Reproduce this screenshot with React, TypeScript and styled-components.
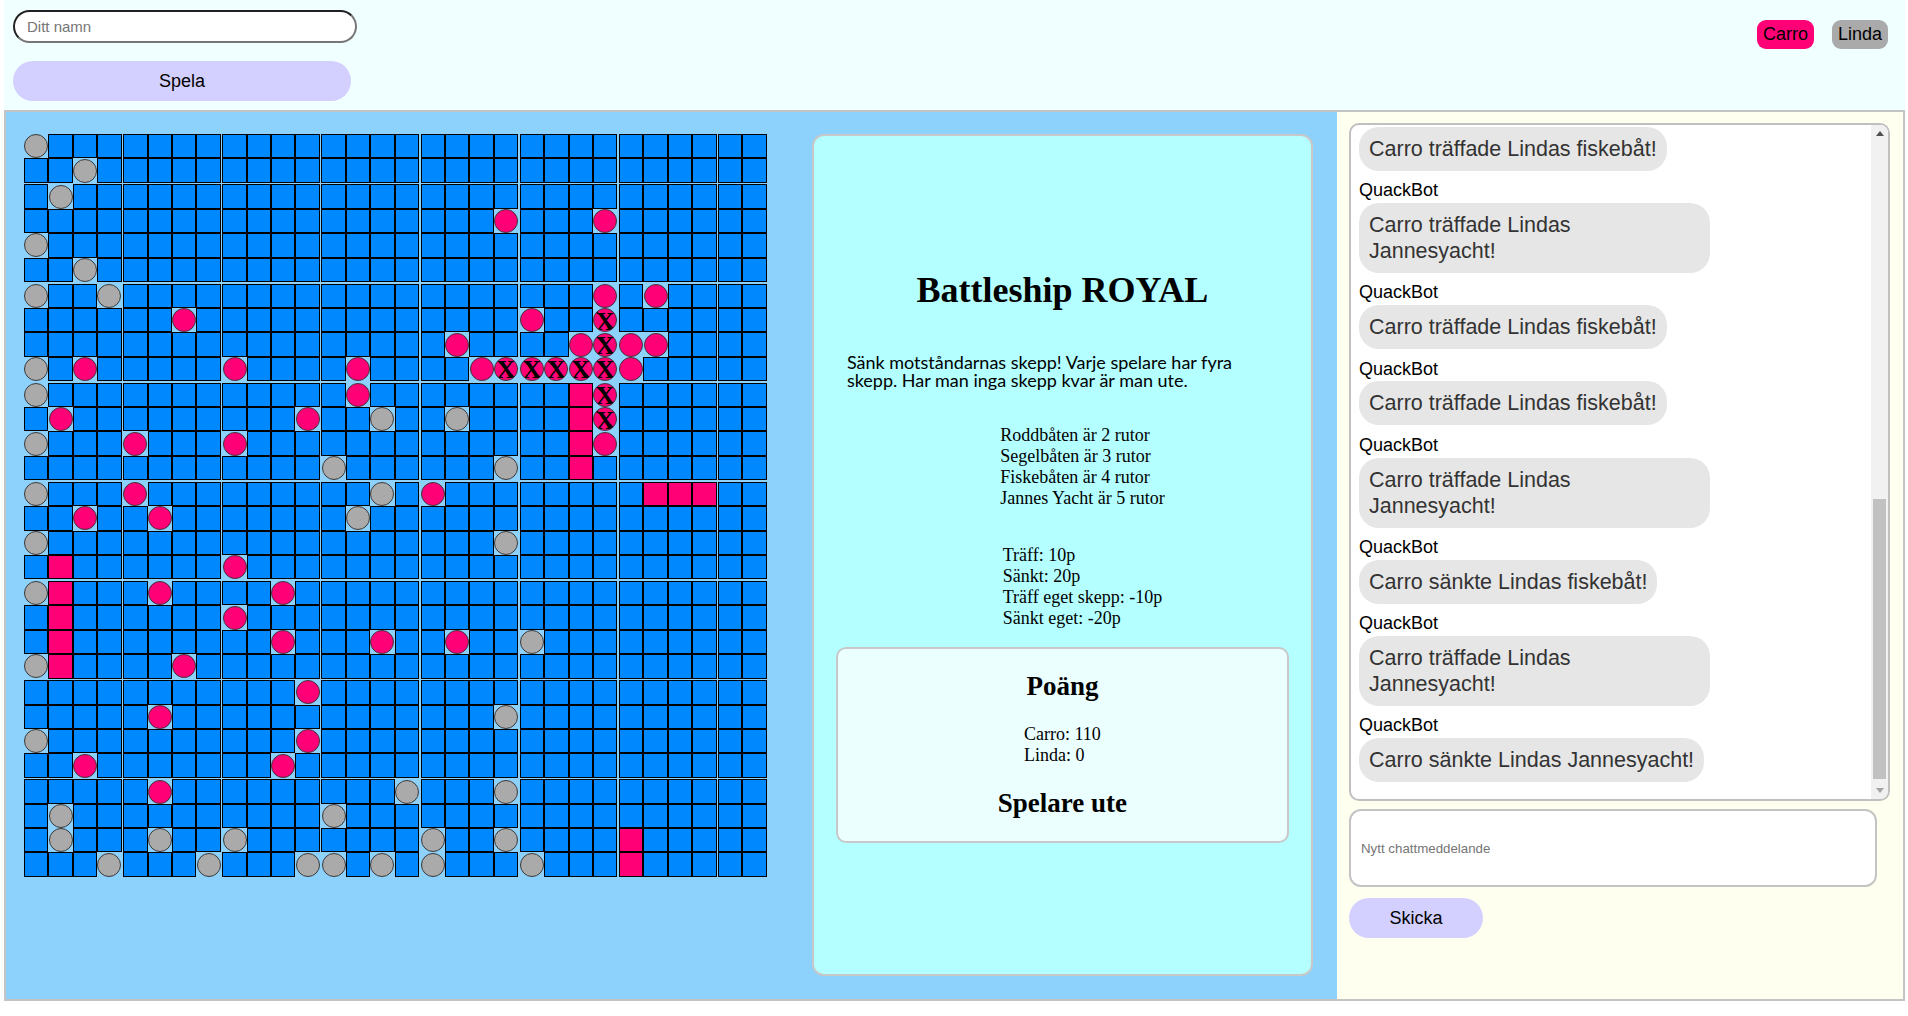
import React, { useLayoutEffect, useRef } from "react";
import styled, { createGlobalStyle } from "styled-components";

const GlobalStyle = createGlobalStyle`
  html, body { margin: 0; padding: 0; background: #ffffff; }
  body { font-family: "Liberation Sans", Arial, sans-serif; color: #000; }
  *, *::before, *::after { box-sizing: border-box; }
`;

type Kind = "water" | "miss" | "hit" | "sunk" | "ship";

const SIZE = 30;

const marks: Record<number, Record<number, Kind>> = {
  0: { 0: "miss" },
  1: { 2: "miss" },
  2: { 1: "miss" },
  3: { 19: "hit", 23: "hit" },
  4: { 0: "miss" },
  5: { 2: "miss" },
  6: { 0: "miss", 3: "miss", 23: "hit", 25: "hit" },
  7: { 6: "hit", 20: "hit", 23: "sunk" },
  8: { 17: "hit", 22: "hit", 23: "sunk", 24: "hit", 25: "hit" },
  9: { 0: "miss", 2: "hit", 8: "hit", 13: "hit", 18: "hit", 19: "sunk", 20: "sunk", 21: "sunk", 22: "sunk", 23: "sunk", 24: "hit" },
  10: { 0: "miss", 13: "hit", 22: "ship", 23: "sunk" },
  11: { 1: "hit", 11: "hit", 14: "miss", 17: "miss", 22: "ship", 23: "sunk" },
  12: { 0: "miss", 4: "hit", 8: "hit", 22: "ship", 23: "hit" },
  13: { 12: "miss", 19: "miss", 22: "ship" },
  14: { 0: "miss", 4: "hit", 14: "miss", 16: "hit", 25: "ship", 26: "ship", 27: "ship" },
  15: { 2: "hit", 5: "hit", 13: "miss" },
  16: { 0: "miss", 19: "miss" },
  17: { 1: "ship", 8: "hit" },
  18: { 0: "miss", 1: "ship", 5: "hit", 10: "hit" },
  19: { 1: "ship", 8: "hit" },
  20: { 1: "ship", 10: "hit", 14: "hit", 17: "hit", 20: "miss" },
  21: { 0: "miss", 1: "ship", 6: "hit" },
  22: { 11: "hit" },
  23: { 5: "hit", 19: "miss" },
  24: { 0: "miss", 11: "hit" },
  25: { 2: "hit", 10: "hit" },
  26: { 5: "hit", 15: "miss", 19: "miss" },
  27: { 1: "miss", 12: "miss" },
  28: { 1: "miss", 5: "miss", 8: "miss", 16: "miss", 19: "miss", 24: "ship" },
  29: { 3: "miss", 7: "miss", 11: "miss", 12: "miss", 14: "miss", 16: "miss", 20: "miss", 24: "ship" },
};

const kindAt = (r: number, c: number): Kind => (marks[r] && marks[r][c]) || "water";

const earlierMessages = [
  "Välkommen till Battleship ROYAL!",
  "Carro har gått med i spelet!",
  "Linda har gått med i spelet!",
  "Spelet har börjat!",
  "Carro träffade Lindas Jannesyacht!",
  "Carro träffade Lindas Jannesyacht!",
  "Carro träffade Lindas fiskebåt!",
  "Carro träffade Lindas Jannesyacht!",
  "Carro träffade Lindas fiskebåt!",
  "Linda är ute ur spelet!",
];

const visibleMessages = [
  "Carro träffade Lindas fiskebåt!",
  "Carro träffade Lindas Jannesyacht!",
  "Carro träffade Lindas fiskebåt!",
  "Carro träffade Lindas fiskebåt!",
  "Carro träffade Lindas Jannesyacht!",
  "Carro sänkte Lindas fiskebåt!",
  "Carro träffade Lindas Jannesyacht!",
  "Carro sänkte Lindas Jannesyacht!",
];

const messages = [...earlierMessages, ...visibleMessages];

/* ---------- layout ---------- */

const Page = styled.div`
  margin: 0 3px 0 4px;
`;

const Header = styled.header`
  height: 110px;
  background: #f0ffff;
  display: flex;
  justify-content: space-between;
  align-items: flex-start;
  padding: 10px 17px 0 9px;
`;

const JoinForm = styled.div`
  display: flex;
  flex-direction: column;
  gap: 18px;
`;

const NameInput = styled.input`
  width: 344px;
  height: 33px;
  border: 2px inset #767676;
  border-radius: 17px;
  padding: 0 12px;
  font-family: "Liberation Sans", Arial, sans-serif;
  font-size: 15px;
  background: #ffffff;
  outline: none;
  &::placeholder { color: #757575; }
`;

const PillButton = styled.button<{ $width: number }>`
  width: ${(p) => p.$width}px;
  height: 40px;
  border: none;
  border-radius: 20px;
  background: #d3d0ff;
  color: #000;
  font-family: "Liberation Sans", Arial, sans-serif;
  font-size: 18px;
  cursor: pointer;
`;

const PlayerList = styled.div`
  display: flex;
  gap: 18px;
  margin-top: 10px;
`;

const PlayerBadge = styled.span<{ $bg: string }>`
  background: ${(p) => p.$bg};
  border-radius: 9px;
  padding: 4px 6px;
  font-size: 18px;
  line-height: 20.7px;
  color: #000;
`;

const Main = styled.main`
  display: flex;
  height: 891px;
  border: 2px solid #c4c4c4;
`;

const GameArea = styled.section`
  flex: 1;
  display: flex;
  align-items: stretch;
  gap: 45px;
  padding: 22px 24px 23px 18px;
  background: #8dd1fd;
`;

const Board = styled.div`
  display: flex;
  flex-direction: column;
  flex: none;
  align-self: flex-start;
`;

const BoardRow = styled.div<{ $blockEnd: boolean }>`
  display: flex;
  margin-bottom: ${(p) => (p.$blockEnd ? "1.6px" : "0")};
`;

const Cell = styled.div<{ $kind: Kind; $blockEnd: boolean }>`
  width: 24.4px;
  height: 24.4px;
  flex: none;
  margin-right: ${(p) => (p.$blockEnd ? "1.6px" : "0")};
  border: ${(p) => (p.$kind === "water" || p.$kind === "ship" ? "1px solid #000" : "none")};
  background: ${(p) =>
    p.$kind === "water" ? "#0088ff" : p.$kind === "ship" ? "#ff0077" : "transparent"};
  display: flex;
  align-items: center;
  justify-content: center;
`;

const Marker = styled.div<{ $color: string }>`
  position: relative;
  width: 24px;
  height: 24px;
  border-radius: 50%;
  background: ${(p) => p.$color};
  border: 1px solid #3a3a3a;
  display: flex;
  align-items: center;
  justify-content: center;
  overflow: hidden;
`;

const SunkMark = styled.span`
  font-family: "Liberation Serif", "Times New Roman", serif;
  font-weight: bold;
  font-size: 26px;
  line-height: 1;
  color: #000;
  margin-top: 3px;
  &::after {
    content: "";
    position: absolute;
    left: 50%;
    top: 50%;
    width: 30px;
    height: 1px;
    background: #000;
    transform: translate(-50%, -50%) rotate(45deg);
  }
`;

const InfoCard = styled.section`
  flex: 1;
  display: flex;
  flex-direction: column;
  justify-content: center;
  padding: 0 22px;
  background: #b4ffff;
  border: 2px solid #c8c8c8;
  border-radius: 12px;
  font-family: "Liberation Serif", "Times New Roman", serif;
  font-size: 18px;
`;

const Title = styled.h1`
  margin: 24px 0;
  font-size: 36px;
  font-weight: bold;
  text-align: center;
`;

const Intro = styled.p`
  margin: 18px 11px;
  font-family: Lato, "Open Sans", sans-serif;
  font-size: 18px;
  line-height: 18px;
`;

const RuleList = styled.ul`
  list-style: none;
  margin: 18px auto;
  padding: 0 0 0 40px;
  width: fit-content;
`;

const ScoreCard = styled.div`
  margin-bottom: 22px;
  background: #ebffff;
  border: 2px solid #c8c8c8;
  border-radius: 10px;
  text-align: center;
`;

const ScoreTitle = styled.h2`
  margin: 22px 0;
  font-size: 27px;
  font-weight: bold;
`;

const ScoreList = styled.div`
  width: fit-content;
  margin: 0 auto;
  text-align: left;
`;

const ChatPanel = styled.aside`
  width: 566px;
  flex: none;
  display: flex;
  flex-direction: column;
  align-items: flex-start;
  padding: 11px 13px 0 12px;
  background: #fffff0;
`;

const MessageBox = styled.div`
  width: 541px;
  height: 678px;
  display: flex;
  overflow: hidden;
  background: #ffffff;
  border: 2px solid #c0c0c0;
  border-radius: 10px;
`;

const MessageList = styled.div`
  flex: 1;
  overflow: hidden;
  padding: 0 8px 7.5px 8px;
`;

const ScrollRail = styled.div`
  width: 17px;
  flex: none;
  display: flex;
  flex-direction: column;
  background: #f1f1f1;
`;

const ScrollArrow = styled.div`
  height: 17px;
  flex: none;
  display: flex;
  align-items: center;
  justify-content: center;
`;

const ScrollTrack = styled.div`
  flex: 1;
  display: flex;
  flex-direction: column;
  justify-content: flex-end;
  padding: 0 2px 3px 2px;
`;

const ScrollThumb = styled.div`
  height: 280px;
  background: #c1c1c1;
`;

const Message = styled.div`
  display: flex;
  flex-direction: column;
  align-items: flex-start;
  margin-bottom: 9.5px;
`;

const Sender = styled.div`
  font-size: 18px;
  line-height: 20.7px;
  margin-bottom: 2px;
  color: #000;
`;

const Bubble = styled.div`
  max-width: 351px;
  padding: 9px 10px;
  border-radius: 20px;
  background: #e6e6e6;
  color: #333;
  font-size: 21.5px;
  line-height: 26px;
`;

const ChatInput = styled.input`
  width: 528px;
  height: 78px;
  margin-top: 8px;
  padding: 0 10px;
  border: 2px solid #c4c4c4;
  border-radius: 12px;
  background: #ffffff;
  font-family: "Liberation Sans", Arial, sans-serif;
  font-size: 13.3px;
  outline: none;
  &::placeholder { color: #757575; }
`;

const SendRow = styled.div`
  margin-top: 11px;
`;

function renderCell(kind: Kind) {
  if (kind === "miss") return <Marker $color="#aaaaaa" />;
  if (kind === "hit") return <Marker $color="#ff0077" />;
  if (kind === "sunk")
    return (
      <Marker $color="#ff0077">
        <SunkMark>X</SunkMark>
      </Marker>
    );
  return null;
}

const Triangle = ({ up, color }: { up: boolean; color: string }) => (
  <svg width="8" height="5" viewBox="0 0 8 5">
    <polygon points={up ? "0,5 8,5 4,0" : "0,0 8,0 4,5"} fill={color} />
  </svg>
);

export default function App() {
  const listRef = useRef<HTMLDivElement>(null);

  useLayoutEffect(() => {
    const el = listRef.current;
    if (el) el.scrollTop = el.scrollHeight;
  }, []);

  const rows = Array.from({ length: SIZE }, (_, r) => r);
  const cols = Array.from({ length: SIZE }, (_, c) => c);

  return (
    <Page>
      <GlobalStyle />
      <Header>
        <JoinForm>
          <NameInput placeholder="Ditt namn" />
          <PillButton $width={338}>Spela</PillButton>
        </JoinForm>
        <PlayerList>
          <PlayerBadge $bg="#ff0077">Carro</PlayerBadge>
          <PlayerBadge $bg="#aaaaaa">Linda</PlayerBadge>
        </PlayerList>
      </Header>
      <Main>
        <GameArea>
          <Board>
            {rows.map((r) => (
              <BoardRow key={r} $blockEnd={r % 4 === 1 && r < SIZE - 1}>
                {cols.map((c) => {
                  const kind = kindAt(r, c);
                  return (
                    <Cell key={c} $kind={kind} $blockEnd={c % 4 === 3 && c < SIZE - 1}>
                      {renderCell(kind)}
                    </Cell>
                  );
                })}
              </BoardRow>
            ))}
          </Board>
          <InfoCard>
            <Title>Battleship ROYAL</Title>
            <Intro>
              Sänk motståndarnas skepp! Varje spelare har fyra skepp. Har man inga skepp kvar är man ute.
            </Intro>
            <RuleList>
              <li>Roddbåten är 2 rutor</li>
              <li>Segelbåten är 3 rutor</li>
              <li>Fiskebåten är 4 rutor</li>
              <li>Jannes Yacht är 5 rutor</li>
            </RuleList>
            <RuleList>
              <li>Träff: 10p</li>
              <li>Sänkt: 20p</li>
              <li>Träff eget skepp: -10p</li>
              <li>Sänkt eget: -20p</li>
            </RuleList>
            <ScoreCard>
              <ScoreTitle>Poäng</ScoreTitle>
              <ScoreList>
                <div>Carro: 110</div>
                <div>Linda: 0</div>
              </ScoreList>
              <ScoreTitle>Spelare ute</ScoreTitle>
            </ScoreCard>
          </InfoCard>
        </GameArea>
        <ChatPanel>
          <MessageBox>
            <MessageList ref={listRef}>
              {messages.map((m, i) => (
                <Message key={i}>
                  <Sender>QuackBot</Sender>
                  <Bubble>{m}</Bubble>
                </Message>
              ))}
            </MessageList>
            <ScrollRail>
              <ScrollArrow>
                <Triangle up color="#505050" />
              </ScrollArrow>
              <ScrollTrack>
                <ScrollThumb />
              </ScrollTrack>
              <ScrollArrow>
                <Triangle up={false} color="#a3a3a3" />
              </ScrollArrow>
            </ScrollRail>
          </MessageBox>
          <ChatInput placeholder="Nytt chattmeddelande" />
          <SendRow>
            <PillButton $width={134}>Skicka</PillButton>
          </SendRow>
        </ChatPanel>
      </Main>
    </Page>
  );
}
